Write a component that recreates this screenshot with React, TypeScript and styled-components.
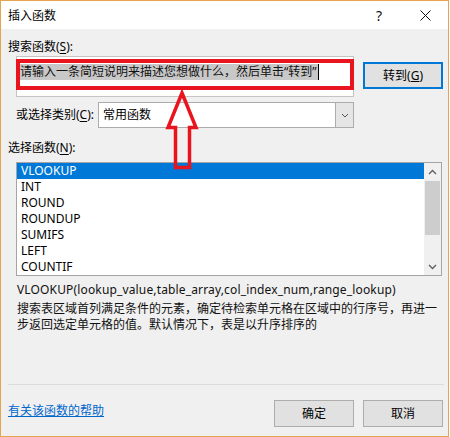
import React from "react";
import styled, { createGlobalStyle } from "styled-components";

const GlobalStyle = createGlobalStyle`
  html, body {
    margin: 0;
    padding: 0;
    background: #ffffff;
  }
  body {
    font-family: "Noto Sans", "Noto Sans CJK SC", sans-serif;
    font-size: 12px;
    color: #000;
  }
`;

const Window = styled.div`
  position: relative;
  width: 449px;
  height: 437px;
  box-sizing: border-box;
  border: 1px solid #e5a550;
  background: #f0f0f0;
  display: flex;
  flex-direction: column;
`;

const TitleBar = styled.div`
  height: 28px;
  background: #ffffff;
  display: flex;
  align-items: center;
  padding-left: 7px;
`;

const Title = styled.div`
  flex: 1;
  line-height: 16px;
  font-family: "Noto Sans CJK SC", sans-serif;
`;

const TitleButton = styled.div`
  width: 46px;
  height: 28px;
  display: flex;
  align-items: center;
  justify-content: center;
  font-family: "Noto Sans", sans-serif;
  font-size: 14px;
  color: #111;
`;

const Body = styled.div`
  flex: 1;
  display: flex;
  flex-direction: column;
  padding: 10px 5px 9px 7px;
  font-family: "Noto Sans", "Noto Sans CJK SC", sans-serif;
`;

const Label = styled.div<{ $indent?: number; $top?: number }>`
  line-height: 16px;
  height: 16px;
  padding-left: ${(p) => p.$indent ?? 0}px;
  margin-top: ${(p) => p.$top ?? 0}px;
  white-space: nowrap;
  u {
    text-decoration: underline;
    text-underline-offset: 2px;
  }
`;

const SearchRow = styled.div`
  display: flex;
  align-items: flex-start;
  padding-left: 8px;
  margin-top: 1px;
`;

const InputBox = styled.div`
  position: relative;
  width: 338px;
  height: 41px;
  box-sizing: border-box;
  border: 1px solid #c4c4c4;
  background: #fff;
  padding: 6px 0 0 3px;
`;

const Selected = styled.span`
  display: inline-block;
  background: #c8c8c8;
  line-height: 16px;
  color: #111;
  padding-right: 1px;
  border-right: 1px solid #000;
`;

const RedFrame = styled.div`
  position: absolute;
  top: 2px;
  left: -1px;
  right: -1px;
  height: 31px;
  box-sizing: border-box;
  border: 4px solid #e9151e;
  pointer-events: none;
`;

const Button = styled.div<{ $primary?: boolean }>`
  width: 80px;
  height: 27px;
  box-sizing: border-box;
  border: ${(p) => (p.$primary ? "2px solid #0078d7" : "1px solid #adadad")};
  background: #e1e1e1;
  display: flex;
  align-items: center;
  justify-content: center;
  line-height: 16px;
`;

const GoButton = styled(Button)`
  margin-left: 9px;
  margin-top: 6px;
`;

const CategoryRow = styled.div`
  display: flex;
  align-items: center;
  padding-left: 8px;
  margin-top: 5px;
`;

const CategoryLabel = styled(Label)`
  width: 82px;
`;

const Select = styled.div`
  width: 256px;
  height: 26px;
  box-sizing: border-box;
  border: 1px solid #acacac;
  background: #fff;
  display: flex;
`;

const SelectValue = styled.div`
  flex: 1;
  padding-left: 4px;
  line-height: 24px;
`;

const SelectArrow = styled.div`
  width: 17px;
  background: #e5e5e5;
  border-left: 1px solid #acacac;
  display: flex;
  align-items: center;
  justify-content: center;
`;

const ListBox = styled.div`
  margin: 6px 1px 0 8px;
  height: 114px;
  box-sizing: border-box;
  border: 1px solid #a5a5a5;
  background: #fff;
  display: flex;
`;

const Rows = styled.div`
  flex: 1;
  display: flex;
  flex-direction: column;
`;

const Row = styled.div<{ $active?: boolean }>`
  height: 16px;
  line-height: 16px;
  padding-left: 4px;
  background: ${(p) => (p.$active ? "#0078d7" : "transparent")};
  color: ${(p) => (p.$active ? "#fff" : "#000")};
`;

const ScrollBar = styled.div`
  width: 17px;
  background: #f0f0f0;
  display: flex;
  flex-direction: column;
`;

const ScrollBtn = styled.div`
  height: 17px;
  display: flex;
  align-items: center;
  justify-content: center;
`;

const Thumb = styled.div`
  height: 54px;
  margin: 1px 1px 0;
  background: #cdcdcd;
`;

const ScrollSpace = styled.div`
  flex: 1;
`;

const Description = styled.div`
  flex: 1;
  padding-left: 9px;
  margin-top: 6px;
`;

const Signature = styled.div`
  line-height: 16px;
  letter-spacing: 0.15px;
  color: #111;
`;

const DescText = styled.div`
  margin-top: 3px;
  line-height: 16px;
  color: #111;
`;

const Separator = styled.div`
  height: 1px;
  background: #dcdcdc;
  margin-right: -1px;
`;

const Footer = styled.div`
  display: flex;
  align-items: center;
  margin-top: 15px;
  gap: 9px;
`;

const HelpLink = styled.a`
  flex: 1;
  color: #0066cc;
  text-decoration: underline;
  line-height: 16px;
  margin-top: -6px;
  cursor: pointer;
`;

const ArrowOverlay = styled.svg`
  position: absolute;
  left: 0;
  top: 0;
  pointer-events: none;
`;

const Chevron = ({ up }: { up?: boolean }) => (
  <svg width="9" height="6" viewBox="0 0 9 6">
    <polyline
      points={up ? "1,5 4.5,1.5 8,5" : "1,1 4.5,4.5 8,1"}
      fill="none"
      stroke="#606060"
      strokeWidth="1.4"
    />
  </svg>
);

const items = ["VLOOKUP", "INT", "ROUND", "ROUNDUP", "SUMIFS", "LEFT", "COUNTIF"];

export default function App() {
  return (
    <>
      <GlobalStyle />
      <Window>
        <TitleBar>
          <Title>插入函数</Title>
          <TitleButton>?</TitleButton>
          <TitleButton>
            <svg width="11" height="11" viewBox="0 0 11 11">
              <path d="M0.5 0.5 L10.5 10.5 M10.5 0.5 L0.5 10.5" stroke="#111" strokeWidth="1" />
            </svg>
          </TitleButton>
        </TitleBar>
        <Body>
          <Label>
            搜索函数(<u>S</u>):
          </Label>
          <SearchRow>
            <InputBox>
              <Selected>请输入一条简短说明来描述您想做什么，然后单击“转到”</Selected>
              <RedFrame />
            </InputBox>
            <GoButton $primary>
              转到(<u>G</u>)
            </GoButton>
          </SearchRow>
          <CategoryRow>
            <CategoryLabel>
              或选择类别(<u>C</u>):
            </CategoryLabel>
            <Select>
              <SelectValue>常用函数</SelectValue>
              <SelectArrow>
                <svg width="8" height="5" viewBox="0 0 8 5">
                  <polyline points="1,1 4,4 7,1" fill="none" stroke="#555" strokeWidth="1" />
                </svg>
              </SelectArrow>
            </Select>
          </CategoryRow>
          <Label $top={12}>
            选择函数(<u>N</u>):
          </Label>
          <ListBox>
            <Rows>
              {items.map((it, i) => (
                <Row key={it} $active={i === 0}>
                  {it}
                </Row>
              ))}
            </Rows>
            <ScrollBar>
              <ScrollBtn>
                <Chevron up />
              </ScrollBtn>
              <Thumb />
              <ScrollSpace />
              <ScrollBtn>
                <Chevron />
              </ScrollBtn>
            </ScrollBar>
          </ListBox>
          <Description>
            <Signature>VLOOKUP(lookup_value,table_array,col_index_num,range_lookup)</Signature>
            <DescText>
              搜索表区域首列满足条件的元素，确定待检索单元格在区域中的行序号，再进一
              <br />
              步返回选定单元格的值。默认情况下，表是以升序排序的
            </DescText>
          </Description>
          <Separator />
          <Footer>
            <HelpLink>有关该函数的帮助</HelpLink>
            <Button>确定</Button>
            <Button>取消</Button>
          </Footer>
        </Body>
        <ArrowOverlay width="449" height="437" viewBox="0 0 449 437">
          <polygon
            points="181,92 195,126.5 188.5,126.5 188.5,166.5 174.5,166.5 174.5,126.5 167,126.5"
            fill="none"
            stroke="#e9151e"
            strokeWidth="3.5"
            strokeLinejoin="miter"
          />
        </ArrowOverlay>
      </Window>
    </>
  );
}
